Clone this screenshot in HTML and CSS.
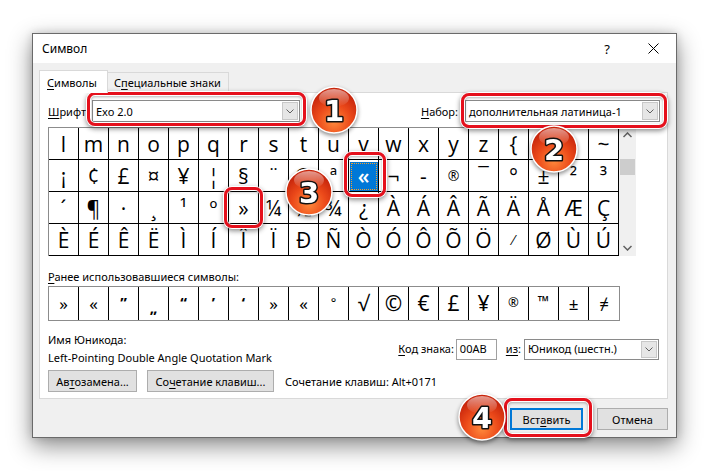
FILE: index.html
```html
<!DOCTYPE html>
<html lang="ru">
<head>
<meta charset="utf-8">
<title>Символ</title>
<link rel="stylesheet" href="styles.css">
</head>
<body>
<div class="dialog">
  <div class="titlebar">
    <div class="title">Символ</div>
    <div class="tbtn">?</div>
    <div class="tbtn">
      <svg width="11" height="11" viewBox="0 0 11 11"><path d="M0.5 0.5 L10.5 10.5 M10.5 0.5 L0.5 10.5" stroke="#000" stroke-width="1" fill="none"/></svg>
    </div>
  </div>
  <div class="content">
    <div class="tabs">
      <div class="tab active"><u>С</u>имволы</div>
      <div class="tab inactive">С<u>п</u>ециальные знаки</div>
    </div>
    <div class="panel">
      <div class="fontrow">
        <span class="lbl-font"><u>Ш</u>рифт:</span>
        <div class="select sel-font"><span class="val">Exo 2.0</span><span class="arrow"><svg width="8" height="5" viewBox="0 0 8 5"><polyline points="0.5,0.5 4,4 7.5,0.5" fill="none" stroke="#606060"/></svg></span></div>
        <span class="spacer"></span>
        <span class="lbl-set"><u>Н</u>абор:</span>
        <div class="select sel-set"><span class="val">дополнительная латиница-1</span><span class="arrow"><svg width="8" height="5" viewBox="0 0 8 5"><polyline points="0.5,0.5 4,4 7.5,0.5" fill="none" stroke="#606060"/></svg></span></div>
      </div>
      <div class="mapwrap">
        <div class="charmap">
          <div class="c">l</div><div class="c">m</div><div class="c">n</div><div class="c">o</div><div class="c">p</div><div class="c">q</div><div class="c">r</div><div class="c">s</div><div class="c">t</div><div class="c">u</div><div class="c">v</div><div class="c">w</div><div class="c">x</div><div class="c">y</div><div class="c">z</div><div class="c">{</div><div class="c">|</div><div class="c">}</div><div class="c">~</div>
          <div class="c">¡</div><div class="c">¢</div><div class="c">£</div><div class="c">¤</div><div class="c">¥</div><div class="c">¦</div><div class="c">§</div><div class="c">¨</div><div class="c">©</div><div class="c">ª</div><div class="c sel"><span>«</span></div><div class="c">¬</div><div class="c">-</div><div class="c small">®</div><div class="c">¯</div><div class="c">°</div><div class="c">±</div><div class="c">²</div><div class="c">³</div>
          <div class="c">´</div><div class="c">¶</div><div class="c">·</div><div class="c">¸</div><div class="c">¹</div><div class="c">º</div><div class="c">»</div><div class="c">¼</div><div class="c">½</div><div class="c">¾</div><div class="c">¿</div><div class="c">À</div><div class="c">Á</div><div class="c">Â</div><div class="c">Ã</div><div class="c">Ä</div><div class="c">Å</div><div class="c">Æ</div><div class="c">Ç</div>
          <div class="c">È</div><div class="c">É</div><div class="c">Ê</div><div class="c">Ë</div><div class="c">Ì</div><div class="c">Í</div><div class="c">Î</div><div class="c">Ï</div><div class="c">Ð</div><div class="c">Ñ</div><div class="c">Ò</div><div class="c">Ó</div><div class="c">Ô</div><div class="c">Õ</div><div class="c">Ö</div><div class="c small">⁄</div><div class="c">Ø</div><div class="c">Ù</div><div class="c">Ú</div>
        </div>
        <div class="scrollbar">
          <div class="sarrow"><svg width="9" height="6" viewBox="0 0 9 6"><polyline points="0.5,5 4.5,1 8.5,5" fill="none" stroke="#606060" stroke-width="1.5"/></svg></div>
          <div class="thumb"></div>
          <div class="sfill"></div>
          <div class="sarrow"><svg width="9" height="6" viewBox="0 0 9 6"><polyline points="0.5,1 4.5,5 8.5,1" fill="none" stroke="#606060" stroke-width="1.5"/></svg></div>
        </div>
      </div>
      <div class="recent-lbl"><u>Р</u>анее использовавшиеся символы:</div>
      <div class="recent">
        <div class="r">»</div><div class="r">«</div><div class="r q">”</div><div class="r q low">„</div><div class="r q">“</div><div class="r q">’</div><div class="r q">‘</div><div class="r">»</div><div class="r">«</div><div class="r sm">°</div><div class="r big">√</div><div class="r big">©</div><div class="r big">€</div><div class="r big">£</div><div class="r big">¥</div><div class="r sm">®</div><div class="r tm">™</div><div class="r">±</div><div class="r">≠</div>
      </div>
      <div class="info">
        <div class="names">
          <div>Имя Юникода:</div>
          <div>Left-Pointing Double Angle Quotation Mark</div>
        </div>
        <div class="codegroup">
          <span><u>К</u>од знака:</span>
          <div class="input">00AB</div>
          <span class="from"><u>из</u>:</span>
          <div class="select sel-from"><span class="val">Юникод (шестн.)</span><span class="arrow"><svg width="8" height="5" viewBox="0 0 8 5"><polyline points="0.5,0.5 4,4 7.5,0.5" fill="none" stroke="#606060"/></svg></span></div>
        </div>
      </div>
      <div class="btnrow">
        <div class="btn b-auto">Ав<u>т</u>озамена...</div>
        <div class="btn b-keys">Со<u>ч</u>етание клавиш...</div>
        <span class="shortcut">Сочетание клавиш: Alt+0171</span>
      </div>
    </div>
    <div class="footer">
      <div class="btn primary">Вст<u>а</u>вить</div>
      <div class="btn cancel">Отмена</div>
    </div>
  </div>
</div>

<div class="hl hl1"></div>
<div class="hl hl2"></div>
<div class="hl hl3"></div>
<div class="hl hlsel"></div>
<div class="hl hl4"></div>

<svg class="badge b1" width="52" height="52" viewBox="0 0 52 52">
  <defs>
    <radialGradient id="bg" cx="50%" cy="75%" r="65%">
      <stop offset="0%" stop-color="#ff8a3c"/>
      <stop offset="55%" stop-color="#ec4a1a"/>
      <stop offset="100%" stop-color="#c8260c"/>
    </radialGradient>
    <linearGradient id="gl" x1="0" y1="0" x2="0" y2="1">
      <stop offset="0%" stop-color="#fff" stop-opacity="0.55"/>
      <stop offset="100%" stop-color="#fff" stop-opacity="0"/>
    </linearGradient>
  </defs>
  <circle cx="26" cy="26" r="23" fill="url(#bg)" stroke="#fff" stroke-width="1.5"/>
  <ellipse cx="26" cy="14" rx="15" ry="9" fill="url(#gl)"/>
  <text x="26" y="37" text-anchor="middle" class="bnum">1</text>
</svg>
<svg class="badge b2" width="52" height="52" viewBox="0 0 52 52">
  <circle cx="26" cy="26" r="23" fill="url(#bg)" stroke="#fff" stroke-width="1.5"/>
  <ellipse cx="26" cy="14" rx="15" ry="9" fill="url(#gl)"/>
  <text x="26" y="37" text-anchor="middle" class="bnum">2</text>
</svg>
<svg class="badge b3" width="52" height="52" viewBox="0 0 52 52">
  <circle cx="26" cy="26" r="23" fill="url(#bg)" stroke="#fff" stroke-width="1.5"/>
  <ellipse cx="26" cy="14" rx="15" ry="9" fill="url(#gl)"/>
  <text x="26" y="37" text-anchor="middle" class="bnum">3</text>
</svg>
<svg class="badge b4" width="52" height="52" viewBox="0 0 52 52">
  <circle cx="26" cy="26" r="23" fill="url(#bg)" stroke="#fff" stroke-width="1.5"/>
  <ellipse cx="26" cy="14" rx="15" ry="9" fill="url(#gl)"/>
  <text x="26" y="37" text-anchor="middle" class="bnum">4</text>
</svg>
</body>
</html>
```
FILE: styles.css
```css
html, body {
  margin: 0;
  padding: 0;
}
body {
  width: 709px;
  height: 471px;
  overflow: hidden;
  position: relative;
  background: #fff;
  font-family: "Noto Sans", "Open Sans", sans-serif;
  font-size: 11px;
  color: #000;
}
u { text-decoration: underline; text-underline-offset: 2px; }

.dialog {
  margin: 33px 0 0 32px;
  width: 645px;
  height: 405px;
  box-sizing: border-box;
  border: 1px solid #6a6a6a;
  background: #f0f0f0;
  box-shadow: 0 8px 22px rgba(0,0,0,0.45), 0 0 8px rgba(0,0,0,0.15);
}
.titlebar {
  height: 29px;
  background: #fff;
  display: flex;
  align-items: center;
  padding-left: 9px;
}
.title { flex: 1; font-size: 12px; }
.tbtn {
  width: 46px;
  height: 29px;
  display: flex;
  align-items: center;
  justify-content: center;
  font-size: 13px;
}
.content {
  padding: 7px 8px 0 6px;
}
.tabs {
  display: flex;
  align-items: flex-end;
  height: 22px;
  white-space: nowrap;
}
.tab {
  box-sizing: border-box;
  border: 1px solid #d9d9d9;
  border-bottom: none;
  display: flex;
  align-items: center;
}
.tab.active {
  width: 69px;
  height: 23px;
  padding-left: 7px;
  background: #fff;
  margin-bottom: -1px;
  position: relative;
  z-index: 1;
}
.tab.inactive {
  width: 122px;
  height: 20px;
  padding-left: 6px;
  margin-left: -1px;
}
.panel {
  background: #fff;
  border: 1px solid #d9d9d9;
  padding: 7px 7px 6px 8px;
}
.fontrow {
  display: flex;
  align-items: center;
  height: 22px;
}
.lbl-font { width: 44px; }
.spacer { flex: 1; }
.lbl-set { margin-right: 7px; }
.select {
  box-sizing: border-box;
  height: 22px;
  border: 1px solid #8a8a8a;
  background: #fff;
  display: flex;
  align-items: center;
}
.select .val { flex: 1; padding-left: 3px; white-space: nowrap; overflow: hidden; }
.select .arrow {
  box-sizing: border-box;
  width: 16px;
  height: 18px;
  margin-right: 1px;
  background: #e6e6e6;
  border: 1px solid #c8c8c8;
  display: flex;
  align-items: center;
  justify-content: center;
}
.sel-font { width: 208px; }
.sel-set { width: 195px; }

.mapwrap {
  display: flex;
  margin-top: 5px;
}
.charmap {
  display: grid;
  grid-template-columns: repeat(19, 30px);
  grid-auto-rows: 32px;
  border-left: 1px solid #8c8c8c;
  border-top: 1px solid #8c8c8c;
  font-family: "Open Sans", "Noto Sans", sans-serif;
  font-size: 21px;
}
.c {
  box-sizing: border-box;
  border-right: 1px solid #000;
  border-bottom: 1px solid #000;
  display: flex;
  align-items: center;
  justify-content: center;
  line-height: 1;
  padding-top: 1px;
}
.c.small { font-size: 14px; }
.c.sel span {
  width: 28px;
  height: 29px;
  background: #0078d7;
  color: #fff;
  display: flex;
  align-items: center;
  justify-content: center;
  outline: 1px dotted #f0a030;
  outline-offset: -2px;
  font-weight: 600;
}
.scrollbar {
  width: 17px;
  height: 129px;
  background: #f0f0f0;
  display: flex;
  flex-direction: column;
  align-items: center;
}
.sarrow {
  width: 17px;
  height: 16px;
  display: flex;
  align-items: center;
  justify-content: center;
}
.thumb {
  width: 15px;
  height: 16px;
  margin-top: 16px;
  background: #cdcdcd;
}
.sfill { flex: 1; }

.recent-lbl {
  margin-top: 12px;
  line-height: 17px;
}
.recent {
  margin-top: 1px;
  display: grid;
  grid-template-columns: repeat(19, 30px);
  grid-auto-rows: 33px;
  width: max-content;
  border: 1px solid #8c8c8c;
  font-family: "Noto Sans", "Open Sans", sans-serif;
  font-size: 17px;
}
.r {
  box-sizing: border-box;
  border-right: 1px solid #000;
  display: flex;
  align-items: center;
  justify-content: center;
  line-height: 1;
}
.r:last-child { border-right: none; }
.r.q { align-items: flex-start; padding-top: 8px; font-weight: 700; font-size: 15px; }
.r.q.low { align-items: flex-end; padding: 0 0 5px; }
.r.sm { font-size: 13px; align-items: flex-start; padding-top: 9px; }
.r.big { font-size: 21px; }
.r.tm { font-size: 15px; align-items: flex-start; padding-top: 7px; }

.info {
  display: flex;
  align-items: center;
  margin-top: 10px;
  line-height: 18px;
}
.codegroup {
  margin-left: auto;
  display: flex;
  align-items: center;
  margin-right: 1px;
}
.input {
  box-sizing: border-box;
  width: 41px;
  height: 21px;
  margin-left: 2px;
  border: 1px solid #a0a0a0;
  padding-left: 3px;
  display: flex;
  align-items: center;
}
.from { margin-left: 9px; }
.sel-from { width: 135px; height: 21px; margin-left: 3px; }
.sel-from .arrow { height: 17px; }

.btnrow {
  display: flex;
  align-items: center;
  margin-top: 3px;
}
.btn {
  box-sizing: border-box;
  height: 22px;
  background: #e1e1e1;
  border: 1px solid #adadad;
  display: flex;
  align-items: center;
  justify-content: center;
}
.b-auto { width: 89px; }
.b-keys { width: 127px; margin-left: 10px; }
.shortcut { margin-left: 11px; }

.footer {
  display: flex;
  justify-content: flex-end;
  margin-top: 9px;
}
.btn.primary { width: 73px; border: 2px solid #0078d7; }
.btn.cancel { width: 71px; margin-left: 14px; }

/* annotation overlays */
.hl {
  position: absolute;
  box-sizing: border-box;
  border: 3px solid #e5101c;
  border-radius: 8px;
  box-shadow: 0 0 0 1px #fff, 0 2px 5px 1px rgba(0,0,0,0.45), inset 0 0 0 1px #fff, inset 0 1px 3px 1px rgba(0,0,0,0.3);
}
.hl1 { left: 87px; top: 92px; width: 219px; height: 34px; }
.hl2 { left: 461px; top: 93px; width: 206px; height: 35px; }
.hl3 { left: 224px; top: 187px; width: 39px; height: 41px; }
.hlsel { left: 344px; top: 152px; width: 42px; height: 45px; }
.hl4 { left: 504px; top: 398px; width: 88px; height: 39px; }

.badge {
  position: absolute;
  filter: drop-shadow(0 2px 2px rgba(0,0,0,0.45));
}
.bnum {
  font-family: "DejaVu Sans", sans-serif;
  font-weight: 700;
  font-size: 29px;
  fill: #fff;
  stroke: #111;
  stroke-width: 3;
  stroke-linejoin: round;
  paint-order: stroke;
}
.b1 { left: 308px; top: 84px; }
.b2 { left: 528px; top: 123px; }
.b3 { left: 283px; top: 166px; }
.b4 { left: 456px; top: 391px; }
```
